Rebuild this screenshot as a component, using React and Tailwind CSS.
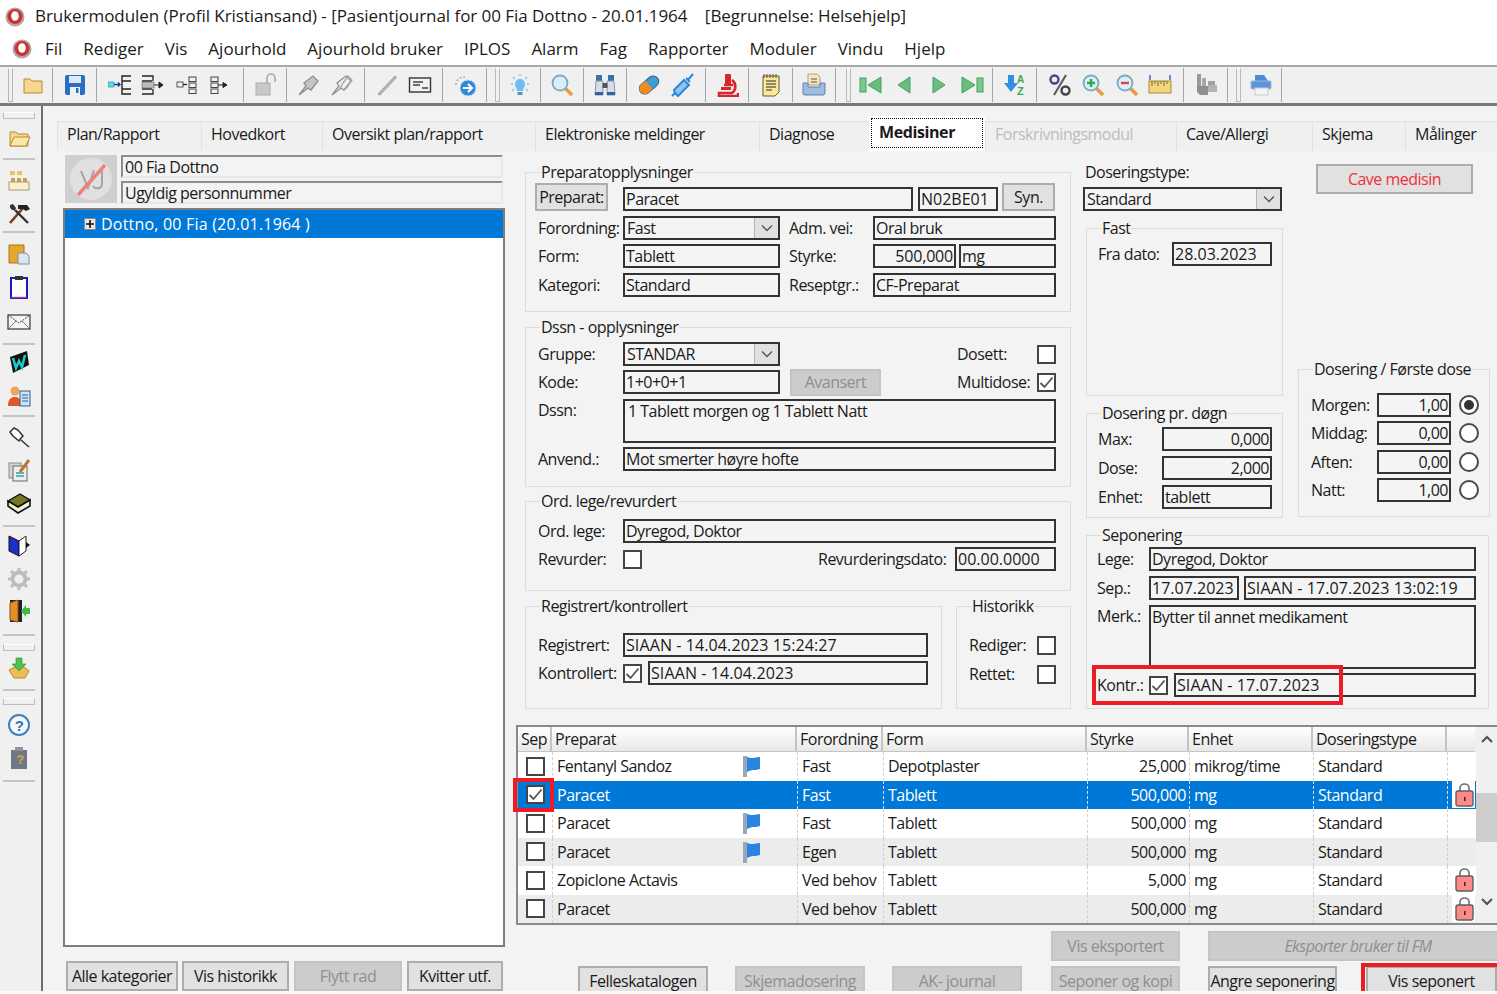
import React from "react";

// ---------- small form pieces ----------
const Box = ({ className = "", h = "h-[24px]", right, top, children }) => (
  <div
    className={`${h} shrink-0 border-2 border-[#333333] bg-[#f4f4f4] px-[1px] flex overflow-hidden whitespace-nowrap ${
      top ? "items-start" : "items-center"
    } ${right ? "justify-end" : ""} ${className}`}
  >
    {children}
  </div>
);

const Combo = ({ className = "", children }) => (
  <div className={`h-[24px] shrink-0 border-2 border-[#333333] bg-[#f4f4f4] pl-[2px] flex items-center justify-between ${className}`}>
    <span>{children}</span>
    <span className="w-[24px] h-[20px] bg-[#e1e1e1] border-l border-[#b5b5b5] flex items-center justify-center">
      <svg width="12" height="8" viewBox="0 0 12 8" fill="none" stroke="#555" strokeWidth="1.4">
        <path d="M1 1.5 6 6.5 11 1.5" />
      </svg>
    </span>
  </div>
);

const Check = ({ checked, className = "" }) => (
  <span className={`w-[19px] h-[19px] shrink-0 border-2 border-[#454545] bg-white flex items-center justify-center ${className}`}>
    {checked && (
      <svg width="15" height="13" viewBox="0 0 15 13" fill="none" stroke="#555" strokeWidth="1.8">
        <path d="M1.5 7 5.5 11 13.5 1.5" />
      </svg>
    )}
  </span>
);

const Radio = ({ on }) => (
  <span className="ml-[8px] w-[20px] h-[20px] rounded-full border-2 border-[#4a4a4a] bg-white flex items-center justify-center">
    {on && <span className="w-[10px] h-[10px] rounded-full bg-[#333333]" />}
  </span>
);

const Btn = ({ className = "", off, children }) => (
  <div
    className={`shrink-0 border-2 flex items-center justify-center whitespace-nowrap ${
      off ? "bg-[#cccccc] border-[#c4c4c4] text-[#8f8f8f]" : "bg-[#e1e1e1] border-[#adadad] text-[#1a1a1a]"
    } ${className}`}
  >
    {children}
  </div>
);

const Group = ({ title, className = "", children }) => (
  <fieldset className={`border border-[#dcdcdc] shrink-0 ${className}`}>
    <legend className="ml-[14px] px-[1px] h-[20px] leading-[20px]">{title}</legend>
    {children}
  </fieldset>
);

const Row = ({ className = "", children }) => <div className={`flex items-center ${className}`}>{children}</div>;
const L = ({ className = "", children }) => <span className={`shrink-0 whitespace-nowrap ${className}`}>{children}</span>;

// ---------- icons ----------
const I = ({ s = 24, children }) => (
  <svg width={s} height={s} viewBox="0 0 24 24" fill="none">
    {children}
  </svg>
);
const Logo = () => (
  <svg width="20" height="20" viewBox="0 0 20 20">
    <circle cx="10" cy="10" r="9.5" fill="#b9a3a3" />
    <circle cx="10" cy="9.5" r="7.5" fill="#c8342f" />
    <ellipse cx="10" cy="9" rx="3.8" ry="4.8" fill="#fff" />
  </svg>
);
const Folder = ({ open }) => (
  <I>
    <path d="M3 6h6l2 2h10v12H3z" fill="#f6d78d" stroke="#b98a2e" />
    {open && <path d="M3 20 7 11h16l-4 9z" fill="#fbe5a9" stroke="#b98a2e" />}
  </I>
);
const Save = () => (
  <I>
    <rect x="2" y="2" width="20" height="20" rx="2" fill="#2a6fc0" />
    <rect x="6" y="3" width="12" height="7" fill="#dfe9f4" />
    <rect x="7" y="14" width="10" height="8" fill="#eef2f7" />
    <rect x="13" y="15" width="2.5" height="5" fill="#2a6fc0" />
  </I>
);
const Tree = ({ v = 0 }) => {
  if (v === 0)
    return (
      <I>
        <rect x="0" y="9" width="6" height="5" fill="#4fe0ea" stroke="#2a7f9a" strokeWidth=".6" />
        <path d="M6 11.5h6M10 9.5l2 2-2 2" stroke="#1f2ea8" strokeWidth="1.4" />
        <path d="M23 3h-9v5h9M23 16h-9v5h9M14 6v12" stroke="#222" strokeWidth="1.4" />
      </I>
    );
  if (v === 1)
    return (
      <I>
        <path d="M1 3h11v5M1 21h11v-5M1 3M1 8h10M1 16h10" stroke="#222" strokeWidth="1.3" />
        <rect x="1" y="9" width="12" height="6" fill="#bbb" stroke="#666" strokeWidth=".6" />
        <path d="M13 12h8M18 9l4 3-4 3z" stroke="#222" fill="#222" strokeWidth="1" />
      </I>
    );
  if (v === 2)
    return (
      <I>
        <rect x="2" y="9" width="6" height="5" stroke="#555" />
        <path d="M8 11.5h4" stroke="#222" strokeWidth="1.3" />
        <rect x="14" y="4" width="7" height="4.5" stroke="#444" />
        <rect x="14" y="10" width="7" height="4.5" stroke="#444" />
        <rect x="14" y="16" width="7" height="4.5" stroke="#444" />
      </I>
    );
  return (
    <I>
      <rect x="3" y="4" width="7" height="4.5" stroke="#444" />
      <rect x="3" y="10" width="7" height="4.5" stroke="#444" />
      <rect x="3" y="16" width="7" height="4.5" stroke="#444" />
      <path d="M10 12h8M15 9.5l4 2.5-4 2.5z" stroke="#222" fill="#222" />
    </I>
  );
};
const LockOpen = () => (
  <I>
    <path d="M14 10V5a4 4 0 0 1 8 0v4" stroke="#b5b5b5" strokeWidth="2" />
    <rect x="3" y="10" width="14" height="12" fill="#c9c9c9" stroke="#adadad" />
  </I>
);
const Pin = ({ dbl }) => (
  <I>
    <path d="M2 22 9 13l-2-3 9-7 5 5-7 9-3-2z" fill={dbl ? "none" : "#c5c5c5"} stroke="#8f8f8f" strokeWidth="1.3" />
    {dbl && <path d="M9 17 13 10l5-7 4 4-6 9" stroke="#a5a5a5" strokeWidth="1.3" />}
  </I>
);
const Pencil = () => (
  <I>
    <path d="M3 21 20 3l1.5 1.5L5 22z" fill="#bdbdbd" stroke="#9a9a9a" />
  </I>
);
const Card = () => (
  <I>
    <rect x="1.5" y="5" width="21" height="14" fill="#f2f2f2" stroke="#333" strokeWidth="1.4" />
    <path d="M5 9h10M5 12h7M14 15h6" stroke="#444" strokeWidth="1.3" />
  </I>
);
const Globe = () => (
  <I>
    <path d="M3 12a8 8 0 0 1 9-8" stroke="#b8b8b8" strokeWidth="2" strokeDasharray="2 2" />
    <circle cx="15" cy="15" r="8" fill="#2e8bd8" stroke="#bcd9f1" />
    <path d="M10 15h8M15 11l4 4-4 4" stroke="#fff" strokeWidth="2" />
  </I>
);
const Bulb = () => (
  <I>
    <path d="M7 11a5 5 0 1 1 10 0c0 3-2 4-2 7H9c0-3-2-4-2-7z" fill="#6bc0f0" />
    <rect x="9.5" y="19" width="5" height="3" fill="#5c8fb5" />
    <path d="M12 1v2M3 11h2M19 11h2M5 4l2 2M19 4l-2 2M4 18l2-2M20 18l-2-2" stroke="#7ac8ee" strokeWidth="1.4" />
  </I>
);
const Mag = ({ sign }) => (
  <I>
    <path d="M15 15 22 22" stroke="#e89a3c" strokeWidth="3.5" />
    <circle cx="10" cy="10" r="7.5" fill="#d8eef8" stroke="#7da9bd" strokeWidth="1.8" />
    {sign === "+" && <path d="M6 10h8M10 6v8" stroke="#2da84a" strokeWidth="2.4" />}
    {sign === "-" && <path d="M6 10h8" stroke="#d6473f" strokeWidth="2.4" />}
  </I>
);
const Binoc = () => (
  <I>
    <rect x="3" y="2" width="6" height="6" fill="#3f6fa5" />
    <rect x="15" y="2" width="6" height="6" fill="#3f6fa5" />
    <path d="M2 22 3 8h7v14zM22 22 21 8h-7v14z" fill="#d5dde6" stroke="#8b98a8" />
    <rect x="9.5" y="10" width="5" height="5" fill="#555" />
    <rect x="2" y="19" width="8" height="3" fill="#2f62a8" />
    <rect x="14" y="19" width="8" height="3" fill="#2f62a8" />
  </I>
);
const Pill = () => (
  <I>
    <g transform="rotate(-40 12 12)">
      <rect x="1" y="6.5" width="22" height="11" rx="5.5" fill="#3f9bd8" stroke="#3a5f7d" />
      <path d="M12 6.5H6.5a5.5 5.5 0 0 0 0 11H12z" fill="#f08c1e" />
    </g>
  </I>
);
const Syringe = () => (
  <I>
    <path d="M1 23 5 19M4 20 7 23l11-11-5-5L3 17zM15 5l4 4M17 7l5-6" stroke="#2b86d8" strokeWidth="2" fill="#8cc5f0" />
  </I>
);
const Micro = () => (
  <I>
    <rect x="10" y="1" width="6" height="12" rx="1" fill="#d8262c" />
    <path d="M9 12h9M17 7a8 8 0 0 1 0 13H4v3h19v-3" stroke="#d8262c" strokeWidth="2.6" />
    <rect x="6" y="14" width="10" height="3" fill="#d8262c" />
  </I>
);
const Note = () => (
  <I>
    <path d="M4 3h16v16l-4 4H4z" fill="#fbe89a" stroke="#6b5a24" />
    <path d="M7 8h10M7 11h10M7 14h10M7 17h6" stroke="#6b6b5a" strokeWidth="1.4" />
    <path d="M5 1v4M8 1v4M11 1v4M14 1v4M17 1v4" stroke="#555" />
  </I>
);
const Tray = () => (
  <I>
    <path d="M6 1h9l3 3v8H6z" fill="#f3e6c0" stroke="#b5a36e" />
    <path d="M9 6h6M9 9h6" stroke="#555" />
    <path d="M1 10h5v4h12v-4h5v10a2 2 0 0 1-2 2H3a2 2 0 0 1-2-2z" fill="#9dbce0" stroke="#5d82ac" />
  </I>
);
const Nav = ({ v }) => {
  const g = "#3fa35a";
  return (
    <I>
      {v === 0 && (
        <>
          <rect x="1" y="5" width="6" height="14" fill="#7cc78f" stroke={g} />
          <path d="M22 4v16L9 12z" fill="#6bbd7f" stroke={g} />
        </>
      )}
      {v === 1 && <path d="M17 4v16L5 12z" fill="#6bbd7f" stroke={g} />}
      {v === 2 && <path d="M7 4v16l12-8z" fill="#6bbd7f" stroke={g} />}
      {v === 3 && (
        <>
          <path d="M2 4v16l13-8z" fill="#6bbd7f" stroke={g} />
          <rect x="17" y="5" width="6" height="14" fill="#7cc78f" stroke={g} />
        </>
      )}
    </I>
  );
};
const Sort = () => (
  <I>
    <path d="M5 2h6v8h4l-7 9-7-9h4z" fill="#2f8fe0" />
    <text x="14" y="10" fontSize="10" fontWeight="700" fill="#38a84a" fontFamily="Liberation Sans">A</text>
    <text x="14" y="22" fontSize="11" fontWeight="700" fill="#38a84a" fontFamily="Liberation Sans">Z</text>
  </I>
);
const Percent = () => (
  <I>
    <circle cx="6.5" cy="6.5" r="4" stroke="#5b3c8a" strokeWidth="2.4" />
    <circle cx="17.5" cy="17.5" r="4" stroke="#444" strokeWidth="2.4" />
    <path d="M18 2 6 22" stroke="#555" strokeWidth="2" />
  </I>
);
const Ruler = () => (
  <I>
    <rect x="1" y="8" width="22" height="12" fill="#f3d57c" stroke="#a88a32" />
    <path d="M4 8v5M7 8v3M10 8v5M13 8v3M16 8v5M19 8v3" stroke="#7a6a2e" />
    <path d="M2 2v5M22 2v5" stroke="#2f62a8" strokeWidth="1.4" />
  </I>
);
const GrayTool = () => (
  <I>
    <rect x="3" y="1" width="4" height="12" fill="#9a9a9a" />
    <rect x="8" y="5" width="4" height="8" fill="#a8a8a8" />
    <rect x="14" y="8" width="7" height="5" fill="#a0a0a0" />
    <path d="M3 13h11v9H6l-3-3z" fill="#8f8f8f" />
    <path d="M14 12h9v7h-9z" fill="#b3b3b3" />
  </I>
);
const BluePrinter = () => (
  <I>
    <path d="M6 2h9l4 6H6z" fill="#4c8cd6" />
    <rect x="2" y="8" width="20" height="8" rx="1" fill="#5b96dc" stroke="#9db9d8" />
    <rect x="6" y="15" width="13" height="7" fill="#f1f4f8" stroke="#c6cfdb" />
  </I>
);
const OrgChart = () => (
  <I>
    <rect x="3" y="2" width="5" height="4" fill="#e6c35c" />
    <rect x="10" y="2" width="5" height="4" fill="#e6c35c" />
    <rect x="4" y="9" width="4" height="4" fill="#c9a24a" />
    <rect x="10" y="9" width="4" height="4" fill="#c9a24a" />
    <rect x="16" y="9" width="4" height="4" fill="#c9a24a" />
    <rect x="2" y="13" width="20" height="8" fill="#f8f0d0" stroke="#a89a78" />
  </I>
);
const Tools = () => (
  <I>
    <path d="M3 21 16 6" stroke="#7b3a1a" strokeWidth="2.6" />
    <path d="M11 3h9l3 4-4 2-3-2h-5z" fill="#222" />
    <path d="M21 21 8 8" stroke="#333" strokeWidth="2.4" />
    <path d="M3 3a4 4 0 0 0 5 5l1-2-3-4z" fill="#333" />
  </I>
);
const FolderCopy = () => (
  <I>
    <path d="M2 3h15v18H2z" fill="#e4a72c" stroke="#a77818" />
    <path d="M11 11h8l3 3v8H11z" fill="#dce5f2" stroke="#7c8ea8" />
  </I>
);
const Clip = () => (
  <I>
    <rect x="4" y="3" width="16" height="20" fill="#fff" stroke="#1a1ab8" strokeWidth="2" />
    <rect x="8" y="1" width="8" height="4" fill="#333" />
    <path d="M4 22.5h16" stroke="#b03a9c" strokeWidth="1.4" />
  </I>
);
const Mail = () => (
  <I>
    <rect x="1" y="5" width="22" height="14" fill="#f4f4f4" stroke="#444" strokeWidth="1.3" />
    <path d="M1 5l11 8 11-8M1 19l8-8M23 19l-8-8" stroke="#444" strokeDasharray="2 1" />
  </I>
);
const Word = () => (
  <I>
    <path d="M3 7 20 1l2 14L6 23z" fill="#111" />
    <path d="M6 8 9 18l3-7 3 6 3-12" stroke="#1fc7c7" strokeWidth="2.6" />
  </I>
);
const Person = () => (
  <I>
    <circle cx="8" cy="7" r="4.5" fill="#f2a35a" />
    <path d="M1 22c0-7 3-9 7-9s6 2 6 9z" fill="#e0562a" />
    <rect x="13" y="7" width="10" height="15" fill="#cfe2f3" stroke="#2a5f94" />
    <path d="M15 11h6M15 14h6M15 17h6" stroke="#2a5f94" />
  </I>
);
const PinBig = () => (
  <I>
    <path d="M22 22 14 15M3 7l4-4 4 2 5 6-2 2-2 3-6-5z" stroke="#333" strokeWidth="1.5" fill="#fff" />
  </I>
);
const EditDoc = () => (
  <I>
    <rect x="2" y="5" width="12" height="15" fill="#d5d5d5" stroke="#888" />
    <rect x="6" y="8" width="14" height="15" fill="#eee" stroke="#666" />
    <path d="M9 15h8M9 18h8" stroke="#2aa" strokeWidth="1.3" />
    <path d="M13 14 22 2" stroke="#c0742a" strokeWidth="3" />
  </I>
);
const Book = () => (
  <I>
    <path d="M1 10 13 3l10 6-12 7z" fill="#767623" stroke="#111" strokeWidth="1.4" />
    <path d="M1 10v5l10 7 12-7V9l-12 7z" fill="#f1f1d8" stroke="#111" strokeWidth="1.6" />
  </I>
);
const BlueBook = () => (
  <I>
    <path d="M2 3 12 8v15L2 18z" fill="#1c2fc8" stroke="#111" />
    <path d="M12 8 19 3v15l-7 5z" fill="#fff" stroke="#222" />
    <path d="M19 9 23 12l-4 3z" fill="#111" />
  </I>
);
const Gear = () => (
  <I>
    <circle cx="12" cy="12" r="6.5" stroke="#bdbdbd" strokeWidth="4" />
    <path d="M12 1v4M12 19v4M1 12h4M19 12h4M4 4l3 3M17 17l3 3M20 4l-3 3M7 17l-3 3" stroke="#bdbdbd" strokeWidth="3" />
  </I>
);
const Door = () => (
  <I>
    <rect x="3" y="1" width="12" height="22" fill="#222" />
    <path d="M3 4 11 1v22l-8-2z" fill="#e4902a" stroke="#8c4d12" />
    <path d="M23 9h-4V6l-5 6 5 6v-3h4z" fill="#3fbb46" />
  </I>
);
const Inbox = () => (
  <I>
    <path d="M2 14 8 11h9l5 4-4 7H7z" fill="#eabf55" stroke="#b58b2b" />
    <path d="M9 2h6v6h4l-7 7-7-7h4z" fill="#4fc04a" stroke="#2f8f30" strokeWidth=".6" />
  </I>
);
const Help = () => (
  <I>
    <circle cx="12" cy="12" r="10" fill="#f4f8fc" stroke="#3d80bd" strokeWidth="2" />
    <text x="12" y="17.5" textAnchor="middle" fontSize="15" fontWeight="700" fill="#2f73b3" fontFamily="Liberation Sans">?</text>
  </I>
);
const HelpBook = () => (
  <I>
    <rect x="4" y="4" width="16" height="19" fill="#6f7887" />
    <rect x="8" y="1" width="8" height="4" fill="#8c94a1" />
    <text x="13" y="18" textAnchor="middle" fontSize="13" fontWeight="700" fill="#d1a83a" fontFamily="Liberation Sans">?</text>
  </I>
);
const Flag = () => (
  <svg width="20" height="22" viewBox="0 0 20 22">
    <rect x="1" y="1" width="4" height="21" fill="#9aa7b5" />
    <path d="M5 2c3 1 4 1 6 1s4-1 7-1v12c-3 1-5 1-7 1-2 0-4 1-6 2z" fill="#2a85e0" />
  </svg>
);
const RedLock = () => (
  <svg width="19" height="24" viewBox="0 0 19 24">
    <path d="M5 9V5a4.5 4 0 0 1 9 0v4" fill="none" stroke="#6f6f6f" strokeWidth="1.6" />
    <rect x="1" y="8" width="17" height="15" rx="2" fill="#f88" stroke="#5f5f5f" strokeWidth="1.4" />
    <rect x="9" y="14" width="1.6" height="4" fill="#333" />
  </svg>
);

// ---------- bars ----------
const Grip = ({ className = "" }) => (
  <div className={`w-[5px] h-[34px] border border-[#b8b8b8] border-t-white bg-[#f0f0f0] shrink-0 ${className}`} />
);
const TB = ({ className = "", children, last }) => (
  <div className={`h-[34px] shrink-0 flex items-center justify-center ${last ? "" : "border-r border-[#a5a5a5]"} ${className}`}>
    {React.Children.map(children, (c) => (
      <span className="w-[33.5px] flex justify-center">{c}</span>
    ))}
  </div>
);
const Toolbar = () => (
  <div className="h-[41px] shrink-0 border-t-2 border-t-[#a8a8a8] border-b-[3px] border-b-[#7a7a7a] bg-[#f0f0f0] pl-[8px] flex items-center">
    <Grip />
    <TB className="w-[40px]"><Folder /></TB>
    <TB className="w-[44px]"><Save /></TB>
    <TB className="w-[147px]"><Tree v={0} /><Tree v={1} /><Tree v={2} /><Tree v={3} /></TB>
    <TB className="w-[43px]"><LockOpen /></TB>
    <TB className="w-[78px]"><Pin /><Pin dbl /></TB>
    <TB className="w-[78px]"><Pencil /><Card /></TB>
    <TB className="w-[44px]"><Globe /></TB>
    <Grip className="ml-[8px]" />
    <TB className="w-[41px]"><Bulb /></TB>
    <TB className="w-[43px]"><Mag /></TB>
    <TB className="w-[43px]"><Binoc /></TB>
    <TB className="w-[79px]"><Pill /><Syringe /></TB>
    <TB className="w-[43px]"><Micro /></TB>
    <TB className="w-[44px]"><Note /></TB>
    <TB className="w-[43px]"><Tray /></TB>
    <Grip className="ml-[10px]" />
    <TB className="w-[142px]"><Nav v={0} /><Nav v={1} /><Nav v={2} /><Nav v={3} /></TB>
    <TB className="w-[44px]"><Sort /></TB>
    <TB className="w-[147px]"><Percent /><Mag sign="+" /><Mag sign="-" /><Ruler /></TB>
    <TB className="w-[44px]"><GrayTool /></TB>
    <Grip className="ml-[8px]" />
    <TB className="w-[41px]"><BluePrinter /></TB>
  </div>
);

const SideLine = ({ className = "" }) => <div className={`h-[2px] bg-[#c4c4c4] mx-[3px] shrink-0 ${className}`} />;
const SideGrip = ({ className = "" }) => (
  <div className={`h-[7px] mx-[3px] border border-[#bdbdbd] border-t-white shrink-0 ${className}`} />
);
const S = ({ className = "h-[33px]", children }) => (
  <div className={`flex items-center justify-center shrink-0 ${className}`}>{children}</div>
);
const Sidebar = () => (
  <div className="w-[41px] shrink-0 bg-[#f0f0f0] pt-[6px] pr-[3px] flex flex-col">
    <SideGrip />
    <S className="h-[36px] mt-[1px]"><Folder open /></S>
    <SideLine className="mt-[2px]" />
    <S className="h-[32px] mt-[5px]"><OrgChart /></S>
    <S><Tools /></S>
    <SideLine className="mt-[1px]" />
    <S className="h-[32px] mt-[5px]"><FolderCopy /></S>
    <S><Clip /></S>
    <S className="h-[33px] mt-[2px]"><Mail /></S>
    <SideLine className="mt-[5px]" />
    <S className="h-[33px] mt-[0px]"><Word /></S>
    <S className="h-[33px] mt-[1px]"><Person /></S>
    <SideLine className="mt-[3px]" />
    <S className="h-[32px] mt-[4px]"><PinBig /></S>
    <S><EditDoc /></S>
    <S><Book /></S>
    <SideLine className="mt-[6px]" />
    <S className="h-[33px] mt-[1px]"><BlueBook /></S>
    <S className="h-[31px] mt-[2px]"><Gear /></S>
    <S><Door /></S>
    <SideLine className="mt-[7px] mx-0" />
    <SideGrip className="mt-[8px]" />
    <S className="h-[33px] mt-[0px]"><Inbox /></S>
    <SideLine className="mt-[5px] mx-0" />
    <SideGrip className="mt-[7px]" />
    <S className="h-[33px] mt-[3px]"><Help /></S>
    <S><HelpBook /></S>
    <SideLine className="mt-[6px]" />
  </div>
);

const tabs = [
  ["Plan/Rapport", "w-[144px]"],
  ["Hovedkort", "w-[121px]"],
  ["Oversikt plan/rapport", "w-[213px]"],
  ["Elektroniske meldinger", "w-[224px]"],
  ["Diagnose", "w-[110px]"],
];
const tabs2 = [
  ["Cave/Allergi", "w-[136px]"],
  ["Skjema", "w-[93px]"],
  ["Målinger", "w-[93px]"],
];
const Tab = ({ className = "", off, children }) => (
  <div
    className={`h-[30px] shrink-0 bg-[#f0f0f0] border-t border-l border-[#e2e2e2] pl-[9px] pb-[5px] flex items-center whitespace-nowrap ${
      off ? "text-[#bdbdbd]" : ""
    } ${className}`}
  >
    {children}
  </div>
);
const Tabs = () => (
  <div className="h-[35px] flex items-end overflow-hidden">
    {tabs.map(([t, w]) => (
      <Tab key={t} className={w}>{t}</Tab>
    ))}
    <div className="w-[116px] h-[35px] shrink-0 bg-white p-[2px] pb-[3px]">
      <div className="h-full border border-dotted border-black flex items-center pl-[7px] pb-[2px] font-bold tracking-[-0.4px]">Medisiner</div>
    </div>
    <Tab className="w-[191px] pl-[7px]" off>Forskrivningsmodul</Tab>
    {tabs2.map(([t, w]) => (
      <Tab key={t} className={w}>{t}</Tab>
    ))}
  </div>
);

// ---------- left panel ----------
const Avatar = () => (
  <div className="ml-[2px] w-[52px] h-[48px] bg-[#cfcfcf] flex items-center justify-center shrink-0">
    <svg width="44" height="44" viewBox="0 0 44 44" fill="none">
      <circle cx="22" cy="22" r="21" fill="#e0e0e0" />
      <path d="M12 14 19 31 25 13M33 13v13c0 7-7 6-9 3" stroke="#a5a5a5" strokeWidth="2" />
      <path d="M9 38 36 8" stroke="#ee8278" strokeWidth="3.4" />
    </svg>
  </div>
);
const LeftPanel = () => (
  <div className="w-[442px] shrink-0 pt-[4px] flex flex-col">
    <div className="flex items-start">
      <Avatar />
      <div className="ml-[4px] w-[382px] flex flex-col gap-[3px]">
        <div className="h-[23px] border-2 border-[#8d8d8d] border-b-[#e8e8e8] border-r-[#e8e8e8] pl-[2px] flex items-center">00 Fia Dottno</div>
        <div className="h-[23px] border-2 border-[#8d8d8d] border-b-[#e8e8e8] border-r-[#e8e8e8] pl-[2px] flex items-center">Ugyldig personnummer</div>
      </div>
    </div>
    <div className="mt-[4px] h-[740px] border-2 border-[#7e7e7e] bg-white">
      <div className="h-[28px] bg-[#0078d7] text-white pl-[19px] flex items-center tracking-[0.2px]">
        <span className="w-[12px] h-[12px] mr-[5px] bg-[#e8e8e8] border border-[#8a8a8a] flex items-center justify-center">
          <svg width="8" height="8" viewBox="0 0 8 8"><path d="M0 4h8M4 0v8" stroke="#111" strokeWidth="1.6" /></svg>
        </span>
        Dottno, 00 Fia (20.01.1964 )
      </div>
    </div>
    <div className="mt-[14px] flex">
      <Btn className="ml-[3px] w-[112px] h-[30px]">Alle kategorier</Btn>
      <Btn className="ml-[4px] w-[107px] h-[30px]">Vis historikk</Btn>
      <Btn className="ml-[5px] w-[108px] h-[30px]" off>Flytt rad</Btn>
      <Btn className="ml-[5px] w-[96px] h-[30px]">Kvitter utf.</Btn>
    </div>
  </div>
);

// ---------- middle forms ----------
const Middle = () => (
  <div className="ml-[20px] w-[546px] shrink-0 pt-[11px] flex flex-col">
    <Group title="Preparatopplysninger" className="h-[150px]">
      <Row className="pt-[1px] pl-[9px] items-end">
        <Btn className="w-[73px] h-[28px]">Preparat:</Btn>
        <Box className="ml-[15px] w-[290px]">Paracet</Box>
        <Box className="ml-[5px] w-[80px] tracking-[0px]">N02BE01</Box>
        <Btn className="ml-[4px] w-[53px] h-[28px]">Syn.</Btn>
      </Row>
      <Row className="mt-[5px] pl-[12px]">
        <L className="w-[85px]">Forordning:</L>
        <Combo className="w-[157px]">Fast</Combo>
        <L className="ml-[9px] w-[84px]">Adm. vei:</L>
        <Box className="w-[183px]">Oral bruk</Box>
      </Row>
      <Row className="mt-[4px] pl-[12px]">
        <L className="w-[85px]">Form:</L>
        <Box className="w-[157px]">Tablett</Box>
        <L className="ml-[9px] w-[84px]">Styrke:</L>
        <Box className="w-[83px] tracking-[-0.2px]" right>500,000</Box>
        <Box className="ml-[3px] w-[97px]">mg</Box>
      </Row>
      <Row className="mt-[5px] pl-[12px]">
        <L className="w-[85px]">Kategori:</L>
        <Box className="w-[157px]">Standard</Box>
        <L className="ml-[9px] w-[84px]">Reseptgr.:</L>
        <Box className="w-[183px]">CF-Preparat</Box>
      </Row>
    </Group>
    <Group title="Dssn - opplysninger" className="h-[170px] mt-[5px]">
      <Row className="pt-[5px] pl-[12px]">
        <L className="w-[85px]">Gruppe:</L>
        <Combo className="w-[157px]">STANDAR</Combo>
        <L className="ml-[177px] w-[80px]">Dosett:</L>
        <Check />
      </Row>
      <Row className="mt-[4px] pl-[12px]">
        <L className="w-[85px]">Kode:</L>
        <Box className="w-[157px]">1+0+0+1</Box>
        <Btn className="ml-[10px] w-[91px] h-[27px] -my-[2px]" off>Avansert</Btn>
        <L className="ml-[76px] w-[80px]">Multidose:</L>
        <Check checked />
      </Row>
      <Row className="mt-[5px] pl-[12px] items-start">
        <L className="w-[85px] pt-[1px]">Dssn:</L>
        <Box className="w-[433px] pl-[3px]" h="h-[44px]" top>1 Tablett morgen og 1 Tablett Natt</Box>
      </Row>
      <Row className="mt-[4px] pl-[12px]">
        <L className="w-[85px]">Anvend.:</L>
        <Box className="w-[433px]">Mot smerter høyre hofte</Box>
      </Row>
    </Group>
    <Group title="Ord. lege/revurdert" className="h-[100px] mt-[4px]">
      <Row className="pt-[8px] pl-[12px]">
        <L className="w-[85px]">Ord. lege:</L>
        <Box className="w-[433px]">Dyregod, Doktor</Box>
      </Row>
      <Row className="mt-[4px] pl-[12px]">
        <L className="w-[85px]">Revurder:</L>
        <Check />
        <L className="ml-[176px] w-[137px]">Revurderingsdato:</L>
        <Box className="w-[101px] tracking-[0px]">00.00.0000</Box>
      </Row>
    </Group>
    <div className="mt-[5px] flex">
      <Group title="Registrert/kontrollert" className="h-[113px] w-[417px]">
        <Row className="pt-[17px] pl-[12px]">
          <L className="w-[85px]">Registrert:</L>
          <Box className="w-[305px] tracking-[0.1px]">SIAAN - 14.04.2023 15:24:27</Box>
        </Row>
        <Row className="mt-[4px] pl-[12px]">
          <L className="w-[85px]">Kontrollert:</L>
          <Check checked />
          <Box className="ml-[6px] w-[280px] tracking-[0.1px]">SIAAN - 14.04.2023</Box>
        </Row>
      </Group>
      <Group title="Historikk" className="h-[113px] w-[115px] ml-[14px]">
        <Row className="pt-[19px] pl-[12px]">
          <L className="w-[68px]">Rediger:</L>
          <Check />
        </Row>
        <Row className="mt-[9px] pl-[12px]">
          <L className="w-[68px]">Rettet:</L>
          <Check />
        </Row>
      </Group>
    </div>
  </div>
);

// ---------- right forms ----------
const DoseRow = ({ label, val, on, className = "mt-[4px]" }) => (
  <Row className={`pl-[12px] ${className}`}>
    <L className="w-[66px]">{label}</L>
    <Box className="w-[74px]" right>{val}</Box>
    <Radio on={on} />
  </Row>
);
const RightForms = () => (
  <div className="ml-[14px] w-[405px] shrink-0 flex flex-col">
    <div className="flex">
      <div className="w-[198px] shrink-0 pt-[11px] flex flex-col">
        <div className="h-[20px] leading-[20px]">Doseringstype:</div>
        <Combo className="-ml-[2px] mt-[5px] w-[199px]">Standard</Combo>
        <Group title="Fast" className="ml-[1px] mt-[7px] w-[197px] h-[178px]">
          <Row className="pt-[4px] pl-[11px]">
            <L className="w-[74px]">Fra dato:</L>
            <Box className="w-[100px] tracking-[0px]">28.03.2023</Box>
          </Row>
        </Group>
        <Group title="Dosering pr. døgn" className="ml-[1px] mt-[7px] w-[197px] h-[115px]">
          <Row className="pt-[4px] pl-[11px]">
            <L className="w-[64px]">Max:</L>
            <Box className="w-[110px]" right>0,000</Box>
          </Row>
          <Row className="mt-[5px] pl-[11px]">
            <L className="w-[64px]">Dose:</L>
            <Box className="w-[110px]" right>2,000</Box>
          </Row>
          <Row className="mt-[5px] pl-[11px]">
            <L className="w-[64px]">Enhet:</L>
            <Box className="w-[110px]">tablett</Box>
          </Row>
        </Group>
      </div>
      <div className="ml-[15px] w-[192px] shrink-0 pt-[13px] flex flex-col">
        <Btn className="ml-[18px] w-[157px] h-[30px] text-[#f0303a]!">Cave medisin</Btn>
        <Group title="Dosering / Første dose" className="mt-[165px] h-[158px]">
          <DoseRow label="Morgen:" val="1,00" on className="pt-[14px]" />
          <DoseRow label="Middag:" val="0,00" />
          <DoseRow label="Aften:" val="0,00" className="mt-[5px]" />
          <DoseRow label="Natt:" val="1,00" />
        </Group>
      </div>
    </div>
    <Group title="Seponering" className="ml-[1px] mt-[7px] w-[403px] h-[184px]">
      <Row className="pt-[2px] pl-[10px]">
        <L className="w-[52px]">Lege:</L>
        <Box className="w-[327px]">Dyregod, Doktor</Box>
      </Row>
      <Row className="mt-[5px] pl-[10px]">
        <L className="w-[52px]">Sep.:</L>
        <Box className="w-[90px] tracking-[0px]">17.07.2023</Box>
        <Box className="ml-[5px] w-[232px] tracking-[0.1px]">SIAAN - 17.07.2023 13:02:19</Box>
      </Row>
      <Row className="mt-[5px] pl-[10px] items-start">
        <L className="w-[52px] pt-[1px]">Merk.:</L>
        <Box className="w-[327px]" h="h-[64px]" top>Bytter til annet medikament</Box>
      </Row>
      <Row className="relative mt-[4px] pl-[10px]">
        <L className="w-[52px]">Kontr.:</L>
        <Check checked />
        <Box className="ml-[6px] w-[302px] tracking-[0.1px]">SIAAN - 17.07.2023</Box>
        <div className="absolute left-[5px] -top-[8px] w-[251px] h-[40px] border-4 border-[#ed1c24]" />
      </Row>
    </Group>
  </div>
);

// ---------- grid ----------
const gridCols = "grid grid-cols-[34px_245px_86px_204px_102px_124px_134px_28px]";
const heads = ["Sep", "Preparat", "Forordning", "Form", "Styrke", "Enhet", "Doseringstype", ""];
const rows = [
  { p: "Fentanyl Sandoz", flag: true, f: "Fast", form: "Depotplaster", s: "25,000", e: "mikrog/time" },
  { p: "Paracet", sel: true, check: true, f: "Fast", form: "Tablett", s: "500,000", e: "mg", lock: true },
  { p: "Paracet", flag: true, f: "Fast", form: "Tablett", s: "500,000", e: "mg" },
  { p: "Paracet", flag: true, alt: true, f: "Egen", form: "Tablett", s: "500,000", e: "mg" },
  { p: "Zopiclone Actavis", f: "Ved behov", form: "Tablett", s: "5,000", e: "mg", lock: true },
  { p: "Paracet", alt: true, f: "Ved behov", form: "Tablett", s: "500,000", e: "mg", lock: true },
];
const Cell = ({ className = "", sel, children }) => (
  <div
    className={`pl-[4px] flex items-center whitespace-nowrap overflow-hidden border-l border-dashed ${
      sel ? "border-[#cfe5f7]" : "border-[#d0d0d0]"
    } ${className}`}
  >
    {children}
  </div>
);
const Grid = () => (
  <div className="ml-[11px] mt-[16px] h-[201px] border-y-2 border-l-2 border-[#8a8a8a] bg-[#f0f0f0] flex">
    <div className="w-[958px] shrink-0">
      <div className={`${gridCols} h-[25px]`}>
        {heads.map((h, i) => (
          <div
            key={i}
            className={`pl-[3px] flex items-center bg-gradient-to-b from-white to-[#e8e8e8] ${
              i < 7 ? "border-r-2 border-[#9a9a9a]" : ""
            } border-b border-[#c4c4c4]`}
          >
            {h}
          </div>
        ))}
      </div>
      {rows.map((r, i) => {
        const bg = r.sel ? "bg-[#0078d7] text-white" : r.alt ? "bg-[#ececec]" : "bg-white";
        return (
          <div key={i} className={`${gridCols} h-[28.5px] ${bg}`}>
            <div className="relative pl-[8px] flex items-center">
              <Check checked={r.check} />
              {r.sel && <div className="absolute -left-[5px] -top-[3px] w-[41px] h-[34px] border-4 border-[#ed1c24]" />}
            </div>
            <Cell sel={r.sel} className="justify-between pr-[35px]">
              <span>{r.p}</span>
              {r.flag && <Flag />}
            </Cell>
            <Cell sel={r.sel}>{r.f}</Cell>
            <Cell sel={r.sel}>{r.form}</Cell>
            <Cell sel={r.sel} className="justify-end pr-[3px]">{r.s}</Cell>
            <Cell sel={r.sel}>{r.e}</Cell>
            <Cell sel={r.sel}>Standard</Cell>
            <Cell sel={r.sel} className="pl-[3px]">
              {r.lock && (
                <span className={`${r.sel || r.alt ? "bg-white" : ""} px-[3px] h-[27px] flex items-center`}>
                  <RedLock />
                </span>
              )}
            </Cell>
          </div>
        );
      })}
    </div>
    <div className="flex-1 flex flex-col items-center">
      <svg className="mt-[7px]" width="14" height="10" viewBox="0 0 14 10" fill="none" stroke="#555" strokeWidth="2.2">
        <path d="M2 8 7 3 12 8" />
      </svg>
      <div className="mt-[49px] h-[49px] w-full bg-[#cdcdcd]" />
      <svg className="mt-[55px]" width="14" height="10" viewBox="0 0 14 10" fill="none" stroke="#555" strokeWidth="2.2">
        <path d="M2 2 7 7 12 2" />
      </svg>
    </div>
  </div>
);

const RightPanel = () => (
  <div className="flex-1 min-w-0 overflow-hidden flex flex-col">
    <div className="flex">
      <Middle />
      <RightForms />
    </div>
    <Grid />
    <div className="mt-[6px] flex">
      <Btn className="ml-[546px] w-[129px] h-[30px]" off>Vis eksportert</Btn>
      <Btn className="ml-[28px] w-[300px] h-[30px] italic tracking-[-0.6px]" off>Eksporter bruker til FM</Btn>
    </div>
    <div className="mt-[5px] flex">
      <Btn className="ml-[73px] w-[130px] h-[30px]">Felleskatalogen</Btn>
      <Btn className="ml-[27px] w-[130px] h-[30px]" off>Skjemadosering</Btn>
      <Btn className="ml-[27px] w-[130px] h-[30px]" off>AK- journal</Btn>
      <Btn className="ml-[29px] w-[129px] h-[30px]" off>Seponer og kopi</Btn>
      <Btn className="ml-[28px] w-[129px] h-[30px]">Angre seponering</Btn>
      <div className="relative ml-[29px]">
        <Btn className="w-[131px] h-[30px]">Vis seponert</Btn>
        <div className="absolute -left-[5px] -top-[3px] w-[150px] h-[50px] border-4 border-[#ed1c24]" />
      </div>
    </div>
  </div>
);

export default function App() {
  return (
    <div className="w-[1497px] h-[994px] overflow-hidden bg-white flex flex-col text-[16px] leading-[20px] text-[#1a1a1a] font-['Open_Sans','Liberation_Sans',sans-serif] tracking-[-0.5px]">
      <div className="h-[33px] shrink-0 pl-[5px] flex items-center whitespace-pre text-[17px] tracking-[-0.05px]">
        <Logo />
        <span className="ml-[10px] pb-[1px]">Brukermodulen (Profil Kristiansand) - [Pasientjournal for 00 Fia Dottno - 20.01.1964    [Begrunnelse: Helsehjelp]</span>
      </div>
      <div className="h-[32px] shrink-0 pl-[12px] flex items-center gap-[21px] text-[17px] tracking-[0px]">
        <span className="-mr-[8px]"><Logo /></span>
        {["Fil", "Rediger", "Vis", "Ajourhold", "Ajourhold bruker", "IPLOS", "Alarm", "Fag", "Rapporter", "Moduler", "Vindu", "Hjelp"].map((m) => (
          <span key={m}>{m}</span>
        ))}
      </div>
      <Toolbar />
      <div className="flex-1 min-h-0 flex overflow-hidden">
        <Sidebar />
        <div className="w-[2px] shrink-0 bg-[#6e6e6e]" />
        <div className="flex-1 min-w-0 bg-[#f3f3f3] pl-[12px] pt-[10px] flex flex-col">
          <div className="ml-[2px]"><Tabs /></div>
          <div className="flex-1 min-h-0 pl-[8px] flex">
            <LeftPanel />
            <RightPanel />
          </div>
        </div>
      </div>
      <div className="h-[3px] shrink-0 bg-[#fafafa]" />
    </div>
  );
}
